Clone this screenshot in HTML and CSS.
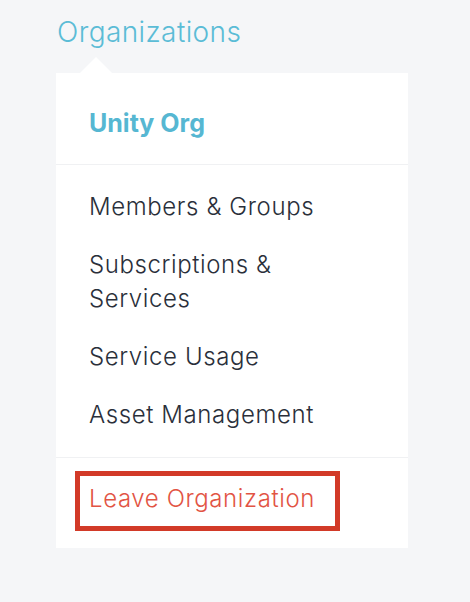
FILE: index.html
```html
<!DOCTYPE html>
<html lang="en">
<head>
    <meta charset="UTF-8">
    <meta name="viewport" content="width=device-width, initial-scale=1.0">
    <title>Organizations</title>
    <link rel="stylesheet" href="styles.css">
</head>
<body>
    <nav class="org-nav">
        <div class="nav-title">Organizations</div>
        <div class="dropdown">
            <div class="org-header">Unity Org</div>
            <ul class="menu">
                <li>Members &amp; Groups</li>
                <li>Subscriptions &amp;<br>Services</li>
                <li>Service Usage</li>
                <li>Asset Management</li>
            </ul>
            <div class="leave-section">
                <span class="leave-link">Leave Organization</span>
            </div>
        </div>
    </nav>
</body>
</html>
```

FILE: styles.css
```css
:root {
    --bg-color: #f5f6f8;
    --accent: #5bbcd6;
    --accent-strong: #56b7d2;
    --text: #2a2f3a;
    --divider: #f0f1f3;
    --danger: #e25444;
    --danger-border: #d23a28;
}

* {
    margin: 0;
    padding: 0;
    box-sizing: border-box;
}

body {
    font-family: 'Inter', 'Noto Sans', sans-serif;
    background: var(--bg-color);
    color: var(--text);
    padding-top: 15px;
}

.org-nav {
    padding-left: 56px;
}

.nav-title {
    font-size: 28px;
    line-height: 34px;
    font-weight: 300;
    letter-spacing: 0.4px;
    color: var(--accent);
    padding-left: 1px;
}

.dropdown {
    position: relative;
    width: 352px;
    margin-top: 24px;
    background: #fff;
}

.dropdown::before {
    content: '';
    position: absolute;
    top: -16px;
    left: 24px;
    border-left: 16px solid transparent;
    border-right: 16px solid transparent;
    border-bottom: 16px solid #fff;
}

.org-header {
    font-size: 25px;
    line-height: 32px;
    font-weight: 700;
    color: var(--accent-strong);
    padding: 34px 33px 25px;
    border-bottom: 1px solid var(--divider);
}

.menu {
    list-style: none;
    display: flex;
    flex-direction: column;
    gap: 24px;
    padding: 25px 33px;
    border-bottom: 1px solid var(--divider);
}

.menu li {
    font-size: 24px;
    line-height: 34px;
    font-weight: 300;
    letter-spacing: 0.6px;
}

.leave-section {
    padding: 13px 19px 17px;
}

.leave-link {
    display: inline-block;
    font-size: 24px;
    line-height: 34px;
    font-weight: 300;
    letter-spacing: 0.6px;
    color: var(--danger);
    border: 5px solid var(--danger-border);
    padding: 6px 20px 10px 9px;
}
```
